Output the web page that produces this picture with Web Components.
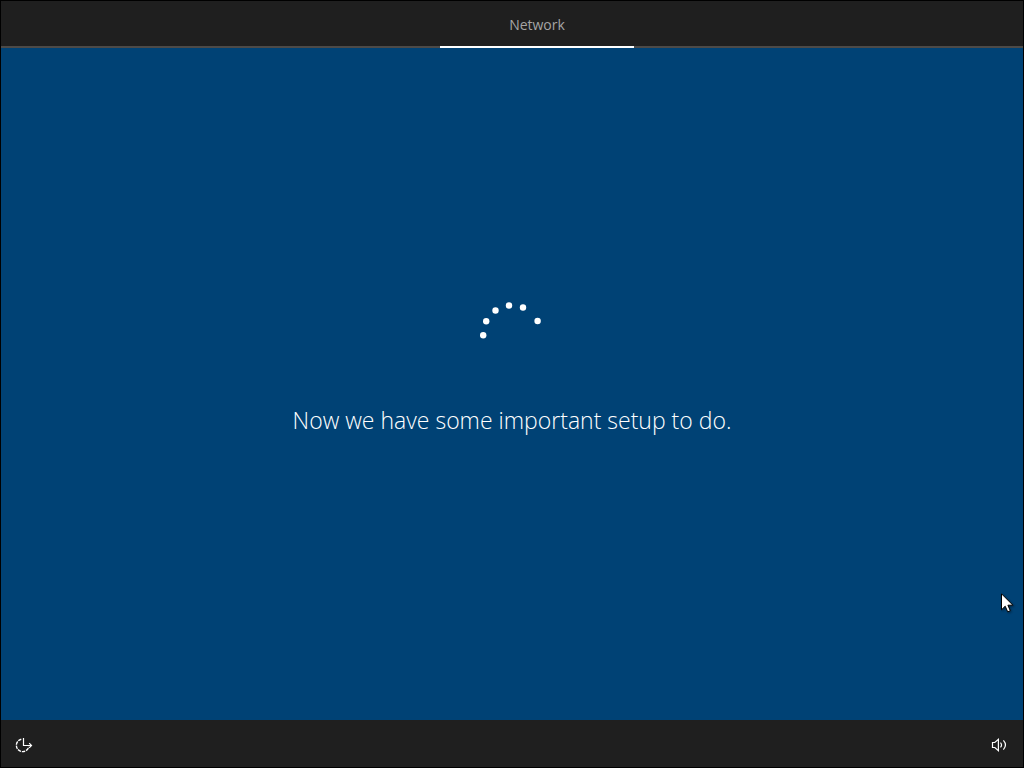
<!DOCTYPE html>
<html lang="en">
<head>
<meta charset="utf-8">
<title>Setup</title>
<style>
html, body { margin: 0; height: 100%; background: #000; }
body { font-family: "Open Sans", "Noto Sans", sans-serif; color: #fff; overflow: hidden; }
</style>
</head>
<body>
<setup-shell>
  <setup-tabs slot="header">
    <setup-tab href="#network">Network</setup-tab>
  </setup-tabs>
  <setup-progress>Now we have some important setup to do.</setup-progress>
  <icon-button slot="start" label="Ease of Access">
    <svg width="18" height="16" viewBox="0 0 18 16" fill="none" stroke="#fff" stroke-width="1.2">
      <path d="M6.3 2.2A6.3 6.3 0 1 0 13.8 9.8" stroke-width="1.4" stroke-dasharray="3.4 .9"/>
      <path d="M8.5 1v7.5h8M14.2 6.2l2.3 2.3-2.3 2.3"/>
    </svg>
  </icon-button>
  <icon-button slot="end" label="Volume">
    <svg width="16" height="16" viewBox="0 0 16 16" fill="none" stroke="#fff" stroke-width="1.2">
      <path d="M1.5 5.5h2.3L7.4 2.4v11.2L3.8 10.5H1.5z"/>
      <path d="M9.5 5.6c1.2 1.4 1.2 3.4 0 4.8M12.4 3.4c2.5 2.8 2.5 6.4 0 9.2"/>
    </svg>
  </icon-button>
</setup-shell>
<mouse-pointer></mouse-pointer>

<script>
function define(name, html, setup) {
  const template = document.createElement('template');
  template.innerHTML = html;
  customElements.define(name, class extends HTMLElement {
    constructor() {
      super();
      this.attachShadow({ mode: 'open' }).append(template.content.cloneNode(true));
    }
    connectedCallback() { if (setup) setup(this); }
  });
}

define('setup-shell', `
  <style>
    :host { display: flex; flex-direction: column; box-sizing: border-box; min-height: 100vh; border: 1px solid #000; background: #004275; }
    header, footer { background: #1f1f1f; }
    main { flex: 1; display: flex; align-items: center; justify-content: center; }
    footer { display: flex; justify-content: space-between; align-items: center; box-sizing: border-box; height: 47px; padding: 2px 16px 0 14px; }
  </style>
  <header><slot name="header"></slot></header>
  <main><slot></slot></main>
  <footer><slot name="start"></slot><slot name="end"></slot></footer>`);

define('setup-tabs', `
  <style>
    :host { display: block; background: linear-gradient(#4c4a48, #4c4a48) bottom / 100% 2px no-repeat; }
    nav { display: flex; justify-content: center; padding-left: 50px; }
  </style>
  <nav aria-label="Setup steps"><slot></slot></nav>`);

define('setup-tab', `
  <style>
    :host { display: block; width: 194px; }
    a { display: block; height: 45px; line-height: 47px; border-bottom: 2px solid #fff; text-align: center; font-size: 14px; color: #a5a5a5; text-decoration: none; }
  </style>
  <a aria-current="step"><slot></slot></a>`,
  el => { el.shadowRoot.querySelector('a').href = el.getAttribute('href'); });

define('setup-progress', `
  <style>
    :host { display: flex; flex-direction: column; align-items: center; gap: 38px; padding: 0 16px 30px; }
    svg { display: block; }
    h1 { margin: 0; font-size: 23px; line-height: 32px; font-weight: 300; text-align: center; }
  </style>
  <svg width="64" height="64" viewBox="0 0 64 64" fill="#fff" role="img" aria-label="Loading">
    <circle cx="3.2" cy="33.3" r="3.2"/>
    <circle cx="6.2" cy="19.3" r="3.2"/>
    <circle cx="15.5" cy="8.5" r="3.2"/>
    <circle cx="29" cy="3.5" r="3.2"/>
    <circle cx="43" cy="5.5" r="3.2"/>
    <circle cx="57.6" cy="19" r="3.2"/>
  </svg>
  <h1><slot></slot></h1>`);

define('icon-button', `
  <style>
    :host { display: block; }
    button { display: flex; margin: 0; padding: 0; border: 0; background: none; color: inherit; }
    ::slotted(svg) { display: block; }
  </style>
  <button type="button"><slot></slot></button>`,
  el => { el.shadowRoot.querySelector('button').setAttribute('aria-label', el.getAttribute('label')); });

define('mouse-pointer', `
  <style>
    :host { position: absolute; right: 10px; bottom: 155px; pointer-events: none; }
    svg { display: block; filter: drop-shadow(1px 1px 1px rgba(0,0,0,.4)); }
  </style>
  <svg width="13" height="20" viewBox="0 0 13 20" aria-hidden="true">
    <path d="M.5 .8v16l3.7-3.6 2.5 5.6 2.6-1.1-2.4-5.5h5z" fill="#fff" stroke="#000"/>
  </svg>`);
</script>
</body>
</html>
